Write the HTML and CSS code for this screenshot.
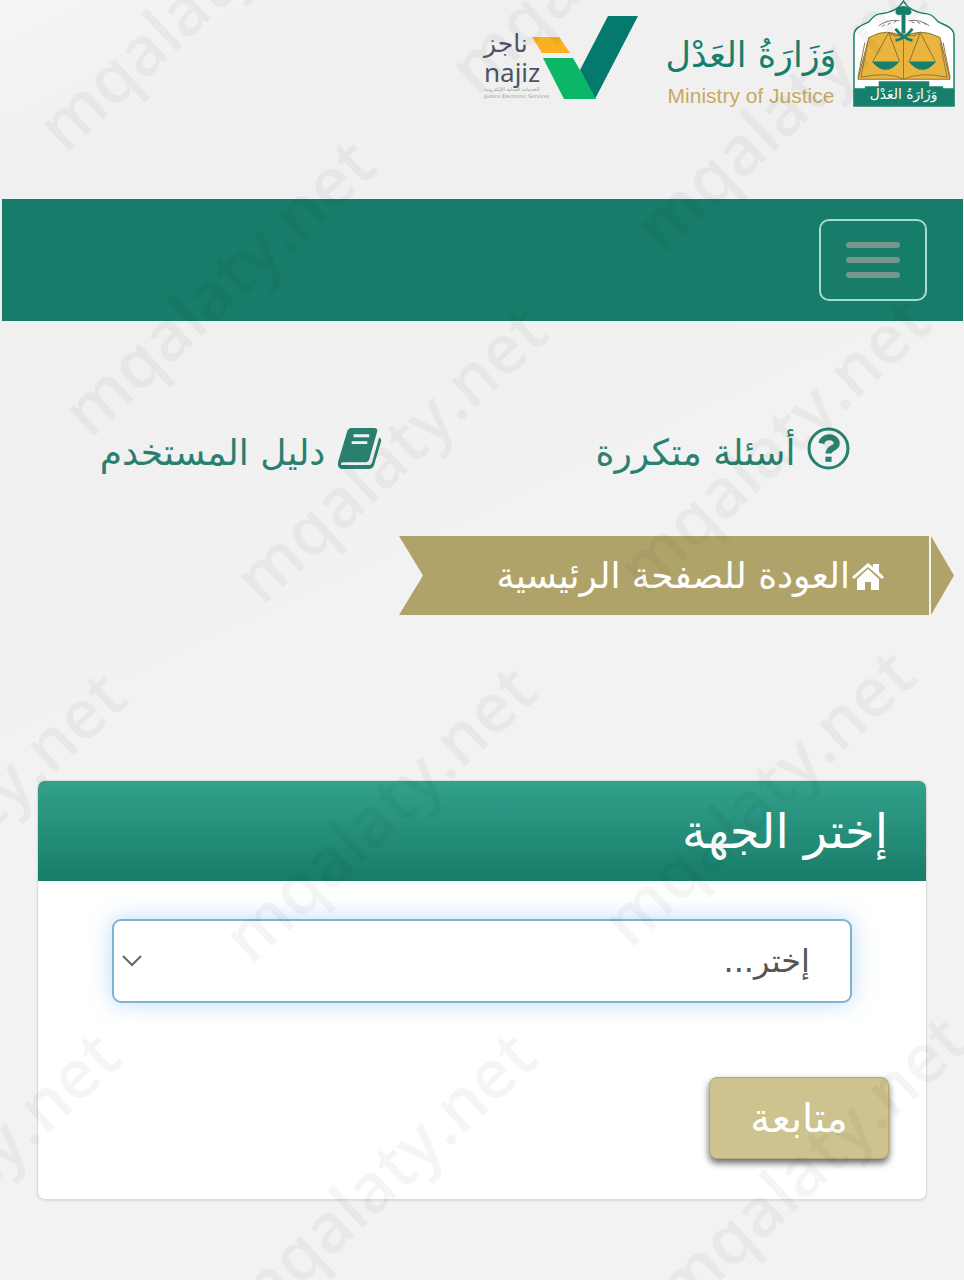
FILE: index.html
```
<!DOCTYPE html>
<html lang="ar" dir="rtl">

<head>
    <meta charset="utf-8">
    <meta name="viewport" content="width=device-width, initial-scale=1">
    <title>وزارة العدل - ناجز</title>
    <link rel="stylesheet" href="styles.css">
</head>

<body>
    <header class="top">
        <a class="moj" href="#">
            <svg class="emblem" viewBox="0 0 103 108" aria-hidden="true">
                <path d="M1 107V36C1 28 8 26 16 22C20 18 21 15 27 14C38 13 46 10 51 1C56 10 64 13 75 14C81 15 82 18 86 22C94 26 102 28 102 36V107Z" fill="#fff" stroke="#17806c" stroke-width="1.5" />
                <path d="M16 38Q35 27 51 38Q67 27 88 38L98 80H5Z" fill="#e9b53e" stroke="#8c713e" />
                <path d="M12 43L5 78M15 43L8 78M91 43L98 78M88 43L95 78M51 38V80M8 78Q36 72 51 80Q68 72 95 78" fill="none" stroke="#95763b" />
                <path d="M36 33L20 62M36 33L47 62M68 33L57 62M68 33L83 62M51 35Q43 38 36 33M51 35Q60 38 68 33" fill="none" stroke="#88713a" />
                <path d="M19 62H47Q33 79 19 62ZM56 62H84Q70 79 56 62Z" fill="#17806c" />
                <path d="M51 13V34" fill="none" stroke="#17806c" stroke-width="4" />
                <path d="M43 29Q49 38 60 41M60 29Q54 38 43 41" fill="none" stroke="#17806c" stroke-width="3" />
                <path d="M44 13C43 5 59 5 58 13Q55 16 51 12Q47 16 44 13Z" fill="#17806c" stroke="#17806c" stroke-width="2" />
                <path d="M26 26Q35 19 47 21M56 21Q68 19 77 26M29 27l3-2m3 0l3-2m3 0l3-2m15 1l3 1m3-1l3 2m3-1l3 2" fill="none" stroke="#777" />
                <path d="M1 107V89H12V87H26V82H77V87H91V89H102V107Z" fill="#17806c" />
                <text x="51" y="100" text-anchor="middle" class="emblem-text">وَزَارَةُ العَدْل</text>
            </svg>
            <span class="moj-name">
                <span class="moj-ar">وَزَارَةُ العَدْل</span>
                <span class="moj-en" dir="ltr">Ministry of Justice</span>
            </span>
        </a>
        <a class="najiz" href="#">
            <svg class="najiz-mark" viewBox="0 0 106 84" aria-hidden="true">
                <path d="M0 21H27L38 37H10Z" fill="#f9b021" />
                <path d="M76 0H106L63 83L48 54Z" fill="#037a6c" />
                <path d="M11 42H41L49 56L64 83H32Z" fill="#0bb666" />
            </svg>
            <span class="najiz-name" dir="ltr">
                <span class="najiz-ar">ناجز</span>
                <span class="najiz-en">najiz</span>
                <small>الخدمات العدلية الإلكترونية</small>
                <small>Justice Electronic Services</small>
            </span>
        </a>
    </header>

    <nav class="navbar">
        <button class="toggler" type="button" aria-label="القائمة">
            <span></span>
            <span></span>
            <span></span>
        </button>
    </nav>

    <main>
        <div class="links">
            <a href="#">
                <svg class="icon" viewBox="0 0 42 42" aria-hidden="true">
                    <circle cx="21" cy="21" r="19" fill="none" stroke="currentColor" stroke-width="3" />
                    <path d="M14 16C16 7 29 9 29 16C29 21 21 20 21 26" fill="none" stroke="currentColor" stroke-width="6" />
                    <path d="M18 29H24V34H18Z" fill="currentColor" />
                </svg>
                <span>أسئلة متكررة</span>
            </a>
            <a href="#">
                <svg class="icon" viewBox="0 0 46 44" aria-hidden="true">
                    <path d="M15 1H38Q42 1 41 5L33 33Q32 36 29 36H6Q4 36 4 38Q4 39 6 39H32Q35 39 36 36L43 11Q46 12 45 15L38 39Q37 43 32 43H6Q0 43 1 36L10 6Q11 1 15 1Z" fill="currentColor" />
                    <path d="M17 9H33M15 16H31" stroke="#f1f1f1" stroke-width="3" />
                </svg>
                <span>دليل المستخدم</span>
            </a>
        </div>

        <a class="back" href="#">
            <span class="back-tip"></span>
            <span class="back-body">
                <svg class="home" viewBox="0 0 32 28" aria-hidden="true">
                    <path d="M16 1L21 5V2H27V10L32 15L30 17L16 5L2 17L0 15Z" fill="#fff" />
                    <path d="M16 7L27 17V28H19V20H13V28H5V17Z" fill="#fff" />
                </svg>
                <span>العودة للصفحة الرئيسية</span>
            </span>
        </a>

        <form class="card">
            <h2><label for="party">إختر الجهة</label></h2>
            <div class="card-body">
                <div class="select-wrap">
                    <select id="party" name="party">
                        <option>إختر...</option>
                    </select>
                    <svg class="chevron" viewBox="0 0 20 12" aria-hidden="true">
                        <path d="M1 1L10 10L19 1" fill="none" stroke="#666" stroke-width="2" />
                    </svg>
                </div>
                <button class="submit" type="submit">متابعة</button>
            </div>
        </form>
    </main>

    <!-- site watermark, drawn over everything -->
    <svg class="watermark" aria-hidden="true" direction="ltr">
        <text transform="translate(65 155) rotate(-43)">mqalaty.net</text>
        <text transform="translate(477 97) rotate(-43)">mqalaty.net</text>
        <text transform="translate(90 440) rotate(-43)">mqalaty.net</text>
        <text transform="translate(663 255) rotate(-43)">mqalaty.net</text>
        <text transform="translate(262 607) rotate(-43)">mqalaty.net</text>
        <text transform="translate(645 597) rotate(-43)">mqalaty.net</text>
        <text transform="translate(-159 972) rotate(-43)">mqalaty.net</text>
        <text transform="translate(251 966) rotate(-43)">mqalaty.net</text>
        <text transform="translate(630 950) rotate(-43)">mqalaty.net</text>
        <text transform="translate(-165 1332) rotate(-43)">mqalaty.net</text>
        <text transform="translate(251 1332) rotate(-43)">mqalaty.net</text>
        <text transform="translate(682 1316) rotate(-43)">mqalaty.net</text>
    </svg>
</body>

</html>
```
FILE: styles.css
```
* {
    box-sizing: border-box;
}

body {
    position: relative;
    margin: 0;
    min-height: 100vh;
    overflow-x: hidden;
    background: linear-gradient(155deg, #f5f5f5 0, #f0f0f0 160px, #f0f0f0 420px, #f2f2f2 720px);
    color: #555;
    font-family: "DejaVu Sans", sans-serif;
    font-size: 36px;
}

a {
    text-decoration: none;
}

/* logos */
.top {
    display: flex;
    align-items: flex-start;
    gap: 28px;
    height: 199px;
    padding: 0 8px;
}

.moj {
    display: flex;
    gap: 16px;
}

.emblem {
    width: 104px;
    height: 107px;
}

.emblem-text {
    fill: #fff;
    font-size: 14px;
}

.moj-name {
    display: flex;
    flex-direction: column;
    align-items: center;
    width: 170px;
    padding-top: 24px;
    white-space: nowrap;
}

.moj-ar {
    color: #17806c;
    font-size: 35px;
    line-height: 62px;
}

.moj-en {
    color: #c8a95f;
    font-family: "Liberation Sans", sans-serif;
    font-size: 21px;
    line-height: 20px;
}

.najiz {
    display: flex;
    padding-top: 16px;
}

.najiz-mark {
    width: 106px;
    height: 84px;
}

.najiz-name {
    display: flex;
    flex-direction: column;
    width: 70px;
    margin-right: -22px;
    padding-top: 14px;
    color: #4b5563;
    white-space: nowrap;
}

.najiz-ar {
    font-size: 25px;
    line-height: 28px;
}

.najiz-en {
    font-family: "Noto Sans", sans-serif;
    font-size: 26px;
    line-height: 28px;
}

.najiz-name small {
    color: #999;
    font-size: 5px;
    line-height: 7px;
}

/* navbar */
.navbar {
    display: flex;
    align-items: center;
    height: 122px;
    margin: 0 1px 0 2px;
    padding: 0 36px;
    background-color: #177c69;
}

.toggler {
    display: flex;
    flex-direction: column;
    align-items: center;
    justify-content: center;
    gap: 9px;
    width: 108px;
    height: 82px;
    border: 2px solid #a5dccd;
    border-radius: 10px;
    background: none;
}

.toggler span {
    width: 54px;
    height: 6px;
    border-radius: 3px;
    background-color: #74978d;
}

.links {
    display: grid;
    grid-template-columns: 1fr 1fr;
    padding-top: 104px;
}

.links a {
    display: flex;
    justify-content: center;
    gap: 12px;
    color: #2a806f;
    line-height: 56px;
    white-space: nowrap;
}

.icon {
    height: 43px;
    margin-top: 2px;
}

/* ribbon back to the home page */
.back {
    display: flex;
    gap: 2px;
    height: 79px;
    margin-top: 55px;
    padding-right: 10px;
    color: #fff;
}

.back-tip {
    width: 23px;
    background-color: #b0a36a;
    clip-path: polygon(0 0, 100% 50%, 0 100%);
}

.back-body {
    display: flex;
    align-items: center;
    gap: 2px;
    width: 530px;
    padding-right: 45px;
    background-color: #b0a36a;
    clip-path: polygon(0 0, 100% 0, 100% 100%, 0 100%, 24px 50%);
    white-space: nowrap;
}

.home {
    width: 32px;
    height: 28px;
}

/* card */
.card {
    margin: 165px 37px 80px;
    border: 1px solid #dcdcdc;
    border-radius: 8px;
    background-color: #fff;
    box-shadow: 0 1px 2px rgba(0, 0, 0, 0.1);
}

.card h2 {
    margin: 0;
    padding: 0 38px;
    border-radius: 7px 7px 0 0;
    background: linear-gradient(#33a18b, #177c69);
    color: #fff;
    font-size: 48px;
    font-weight: normal;
    line-height: 100px;
}

.card-body {
    padding: 38px 37px 40px;
}

.select-wrap {
    position: relative;
    margin: 0 37px 74px;
}

.select-wrap select {
    width: 100%;
    height: 84px;
    padding: 0 40px;
    border: 2px solid #7fb4cf;
    border-radius: 9px;
    outline: none;
    background-color: #fff;
    box-shadow: 0 0 22px rgba(120, 185, 245, 0.5);
    color: #555;
    font: inherit;
    font-size: 32px;
    appearance: none;
}

.chevron {
    position: absolute;
    left: 10px;
    top: 36px;
    width: 20px;
    height: 12px;
}

.submit {
    display: block;
    width: 180px;
    height: 82px;
    border: 1px solid #b5a970;
    border-radius: 8px;
    background-color: #cdc38e;
    box-shadow: 0 4px 7px rgba(0, 0, 0, 0.6);
    color: #fff;
    font: inherit;
    font-size: 40px;
}

.watermark {
    position: absolute;
    top: 0;
    left: 0;
    width: 100%;
    height: 100%;
    overflow: hidden;
    pointer-events: none;
}

.watermark text {
    fill: rgba(0, 0, 0, 0.04);
    font-family: "Open Sans", sans-serif;
    font-size: 68px;
    font-weight: 600;
}
```
